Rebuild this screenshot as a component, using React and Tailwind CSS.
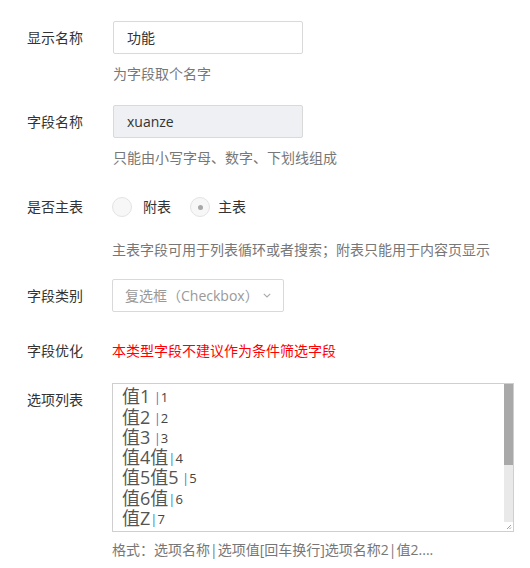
export default function App() {
  const font = { fontFamily: '"Open Sans", "Noto Sans CJK SC", sans-serif' };
  const rows = [
    ["值1", " ", "1"],
    ["值2", " ", "2"],
    ["值3", " ", "3"],
    ["值4值", "", "4"],
    ["值5值5", " ", "5"],
    ["值6值", "", "6"],
    ["值Z", "", "7"],
  ];
  return (
    <div className="w-[530px] h-[568px] bg-white text-[14px] text-[#333] pl-[27px] pt-[21px] overflow-hidden" style={font}>
      {/* 显示名称 */}
      <div className="flex items-center">
        <div className="w-[86px] leading-[20px]">显示名称</div>
        <div className="w-[190px] h-[33px] border border-[#d9d9d9] rounded-[2px] flex items-center px-[13px] text-[#333]">功能</div>
      </div>
      <div className="ml-[86px] mt-[10px] leading-[20px] text-[#777]">为字段取个名字</div>

      {/* 字段名称 */}
      <div className="flex items-center mt-[21px]">
        <div className="w-[86px] leading-[20px]">字段名称</div>
        <div className="w-[190px] h-[33px] border border-[#d9d9d9] bg-[#eef0f4] rounded-[2px] flex items-center px-[13px] text-[#333]">xuanze</div>
      </div>
      <div className="ml-[86px] mt-[10px] leading-[20px] text-[#777]">只能由小写字母、数字、下划线组成</div>

      {/* 是否主表 */}
      <div className="flex items-center mt-[29px] h-[20px]">
        <div className="w-[85px] leading-[20px]">是否主表</div>
        <div className="flex items-center">
          <span className="w-[20px] h-[20px] rounded-full border border-[#e3e3e3] bg-[#f7f7f8]" />
          <span className="ml-[11px] leading-[20px]">附表</span>
          <span className="ml-[19px] w-[20px] h-[20px] rounded-full border border-[#e3e3e3] bg-[#f7f7f8] flex items-center justify-center">
            <span className="w-[5px] h-[5px] rounded-full bg-[#a8a8a8]" />
          </span>
          <span className="ml-[8px] leading-[20px]">主表</span>
        </div>
      </div>
      <div className="ml-[85px] mt-[23px] leading-[20px] text-[#777]">主表字段可用于列表循环或者搜索；附表只能用于内容页显示</div>

      {/* 字段类别 */}
      <div className="flex items-center mt-[19px]">
        <div className="w-[85px] leading-[20px]">字段类别</div>
        <div className="w-[172px] h-[33px] border border-[#d9d9d9] rounded-[2px] flex items-center pl-[12px] text-[#999]">
          <span>复选框（Checkbox）</span>
          <svg className="ml-[4px]" width="8" height="5" viewBox="0 0 8 5" fill="none">
            <path d="M0.8 0.8 L4 4 L7.2 0.8" stroke="#aaa" strokeWidth="1.1" />
          </svg>
        </div>
      </div>

      {/* 字段优化 */}
      <div className="flex items-center mt-[29px] leading-[20px]">
        <div className="w-[85px]">字段优化</div>
        <div className="text-[#ff0000]">本类型字段不建议作为条件筛选字段</div>
      </div>

      {/* 选项列表 */}
      <div className="flex mt-[22px]">
        <div className="w-[85px] leading-[20px] pt-[7px]">选项列表</div>
        <div>
          <div className="relative w-[402px] h-[149px] border border-[#cfcfcf] overflow-hidden">
            <div className="pl-[9px] pt-[2px] text-[#555]">
              {rows.map(([big, sp, n], i) => (
                <div key={i} className="h-[20.3px] flex items-end whitespace-pre">
                  <span className="text-[18px] leading-[20px]">{big}</span>
                  <span className="text-[13px] leading-[16px] mb-[1px]">{sp}</span>
                  <span className="text-[13px] leading-[16px] mb-[1px] text-[#3f7bc4]">|</span>
                  <span className="text-[13px] leading-[16px] mb-[1px] text-[#444]">{n}</span>
                </div>
              ))}
            </div>
            <div className="absolute right-0 top-0 bottom-0 w-[9px] bg-[#e9e9e9] flex flex-col">
              <div className="h-[81px] bg-[#a9a9a9]" />
              <div className="flex-1" />
              <div className="h-[9px] bg-white" />
            </div>
            <svg className="absolute right-[1px] bottom-[1px]" width="6" height="6" viewBox="0 0 6 6">
              <path d="M5 1 L1 5 M5 3.5 L3.5 5" stroke="#888" strokeWidth="0.8" />
            </svg>
          </div>
          <div className="mt-[8px] leading-[20px] text-[#777]">格式：选项名称|选项值[回车换行]选项名称2|值2....</div>
        </div>
      </div>
    </div>
  );
}
